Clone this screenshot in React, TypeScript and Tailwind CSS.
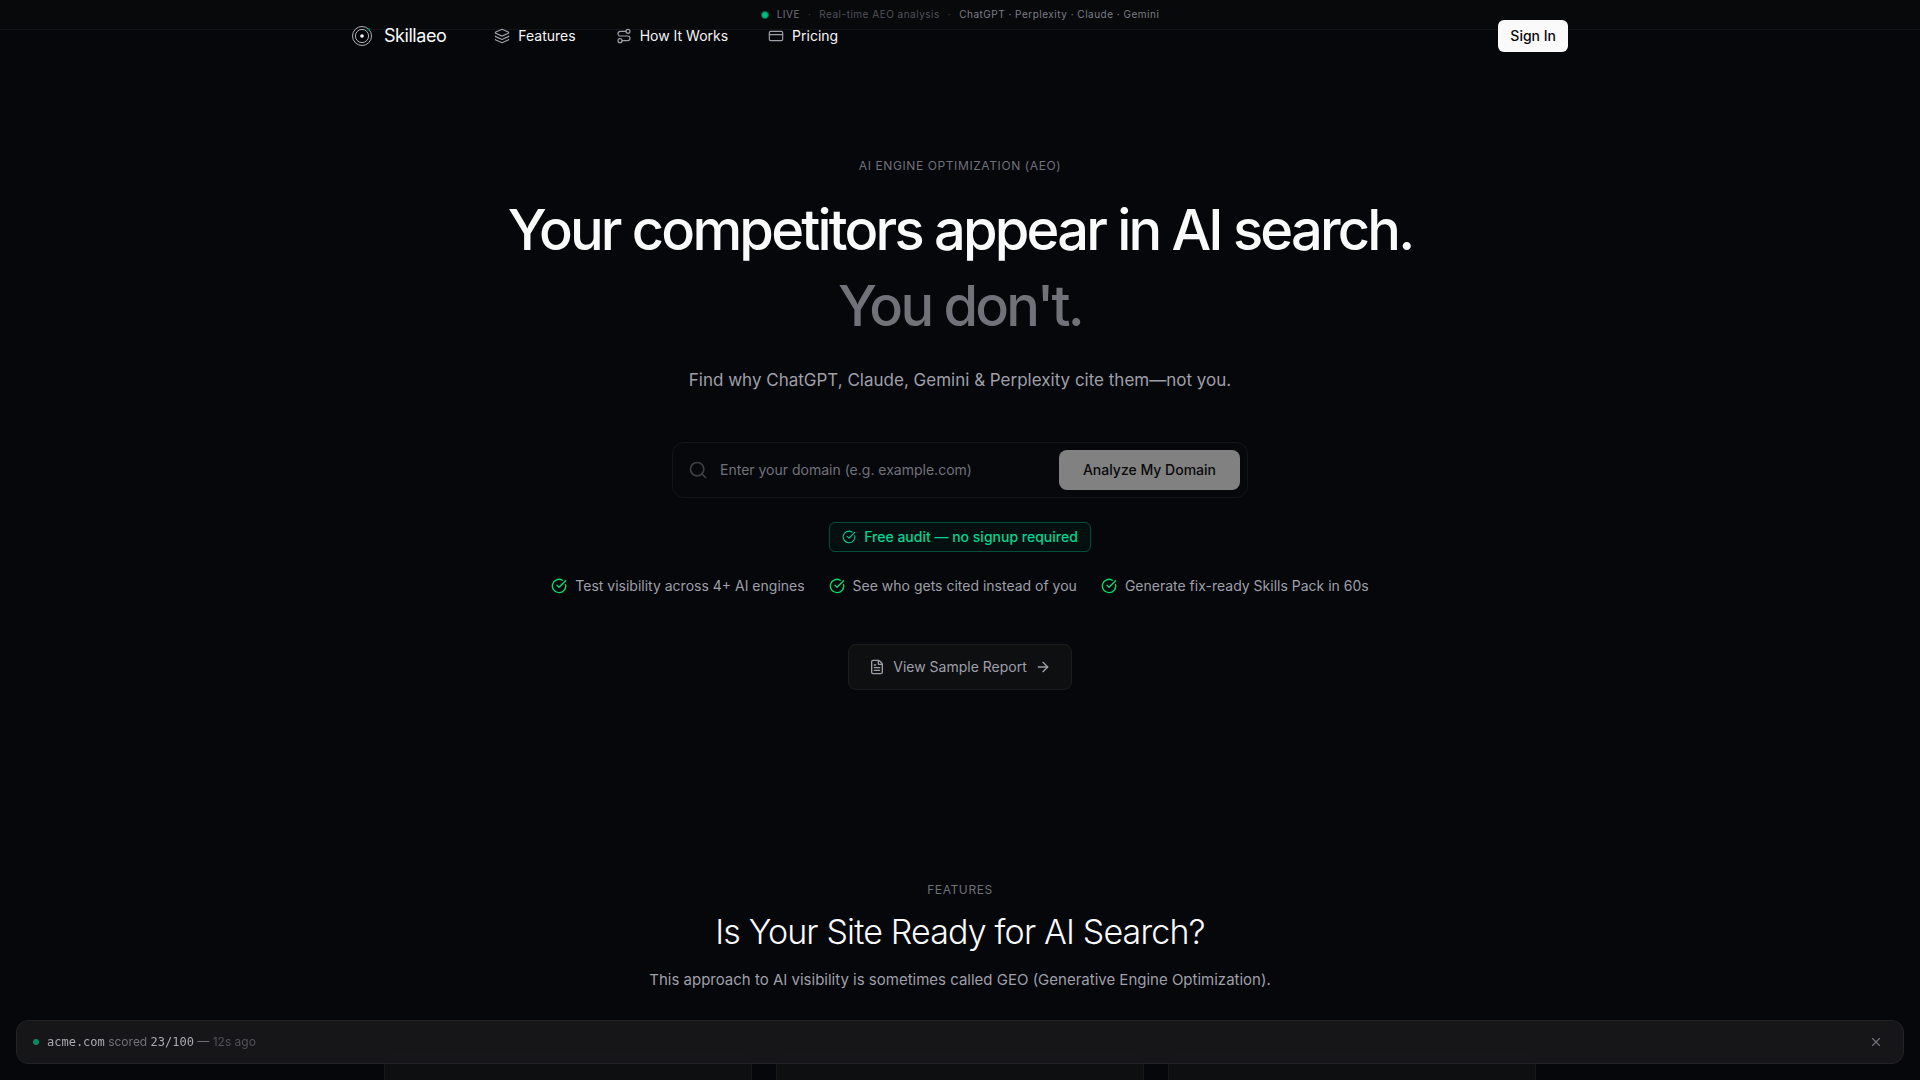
import React, { useState } from 'react';
import { ArrowRight, CircleCheckBig, CreditCard, FileText, Layers, Route, Search, X } from 'lucide-react';

const navLinks = [
  { id: 'features', label: 'Features', icon: Layers },
  { id: 'how-it-works', label: 'How It Works', icon: Route },
  { id: 'pricing', label: 'Pricing', icon: CreditCard }
];

const benefits = [
  'Test visibility across 4+ AI engines',
  'See who gets cited instead of you',
  'Generate fix-ready Skills Pack in 60s'
];

function Logo() {
  return (
    <svg viewBox="0 0 20 20" className="size-5" fill="none" aria-hidden="true">
      <circle cx="10" cy="10" r="9.5" stroke="#c4c4c8" strokeWidth="0.9" />
      <circle cx="10" cy="10" r="6.6" stroke="#c4c4c8" strokeWidth="0.9" />
      <circle cx="10" cy="10" r="1.8" fill="#fafafa" />
      <circle cx="16.7" cy="3.4" r="1.3" fill="#047857" />
    </svg>
  );
}

function LiveStrip() {
  return (
    <div className="col-start-1 row-start-1 self-start flex items-center justify-center gap-2 h-[30px] bg-[#08090b] border-b border-[#121315] text-[10px] tracking-wider text-[#3f3f46]">
      <span className="flex items-center gap-2 text-[#71717a]">
        <span className="size-2 rounded-full bg-[#00bc7d] border border-[#065f46]" />
        LIVE
      </span>
      <span>·</span>
      <span className="text-[#52525b]">Real-time AEO analysis</span>
      <span>·</span>
      <span className="text-[#7c7c85]">ChatGPT · Perplexity · Claude · Gemini</span>
    </div>
  );
}

function Header() {
  return (
    <header className="grid">
      <LiveStrip />
      <nav className="col-start-1 row-start-1 w-full max-w-7xl mx-auto px-8 h-[72px] flex items-center">
        <a href="#" className="flex items-center gap-3 text-lg tracking-tight text-[#fafafa]">
          <Logo />
          Skillaeo
        </a>
        <div className="ml-12 flex items-center gap-10">
          {navLinks.map(({ id, label, icon: Icon }) => (
            <a key={id} href={`#${id}`} className="flex items-center gap-2 text-sm text-[#f4f4f5]">
              <Icon className="size-4 text-[#9f9fa9]" strokeWidth={1.75} />
              {label}
            </a>
          ))}
        </div>
        <button className="ml-auto h-8 px-3 rounded-md bg-[#fafafa] text-sm font-medium text-[#09090b]">Sign In</button>
      </nav>
    </header>
  );
}

function Hero() {
  const [domain, setDomain] = useState('');
  return (
    <section className="flex flex-col items-center pt-[84px] text-center">
      <p className="text-xs leading-5 tracking-wider uppercase text-[#71717a]">AI Engine Optimization (AEO)</p>
      <h1 className="mt-4 text-[56px] leading-[76px] font-medium tracking-tighter text-[#fafafa]">
        Your competitors appear in AI search.
        <span className="block text-[#71717a]">You don't.</span>
      </h1>
      <p className="mt-[22px] text-[17px] leading-7 text-[#9f9fa9]">
        Find why ChatGPT, Claude, Gemini &amp; Perplexity cite them—not you.
      </p>

      <form
        onSubmit={e => e.preventDefault()}
        className="mt-12 w-full max-w-[576px] h-14 flex items-center pl-4 pr-2 rounded-xl ring-1 ring-inset ring-[#131517] bg-[#06080b]"
      >
        <Search className="size-5 text-[#3f3f46]" aria-hidden="true" />
        <input
          type="text"
          aria-label="Domain"
          value={domain}
          onChange={e => setDomain(e.target.value)}
          placeholder="Enter your domain (e.g. example.com)"
          className="flex-1 min-w-0 px-3 bg-transparent outline-none text-sm text-[#fafafa] placeholder:text-[#71717a]"
        />
        <button className="h-10 px-6 rounded-lg bg-[#818181] text-sm font-medium text-[#09090b]">Analyze My Domain</button>
      </form>

      <p className="mt-6 h-[30px] px-3 flex items-center gap-2 rounded-md border border-[#044e37] bg-[#04100f] text-sm font-medium text-[#00d492]">
        <CircleCheckBig className="size-3.5" strokeWidth={1.75} />
        Free audit — no signup required
      </p>

      <ul className="mt-6 flex flex-wrap justify-center gap-6 text-sm text-[#9f9fa9]">
        {benefits.map(text => (
          <li key={text} className="flex items-center gap-2">
            <CircleCheckBig className="size-4 text-[#05df72]" />
            {text}
          </li>
        ))}
      </ul>

      <a
        href="#sample-report"
        className="mt-12 h-[46px] px-5 flex items-center gap-2 rounded-lg border border-[#1c1d1f] bg-[#0e0f11] text-sm text-[#9f9fa9]"
      >
        <FileText className="size-4" />
        View Sample Report
        <ArrowRight className="size-4" />
      </a>
    </section>
  );
}

function Features() {
  return (
    <section id="features" className="pt-[190px] text-center">
      <p className="text-xs leading-5 tracking-wider uppercase text-[#71717a]">Features</p>
      <h2 className="mt-3 text-[34px] leading-10 font-light tracking-tight text-[#fafafa]">
        Is Your Site Ready for AI Search?
      </h2>
      <p className="mt-4 text-[15px] leading-6 text-[#9f9fa9]">
        This approach to AI visibility is sometimes called GEO (Generative Engine Optimization).
      </p>
      <div className="mt-[60px] mx-auto max-w-[1152px] grid grid-cols-3 gap-6">
        <div className="h-64 rounded-xl border border-[#17181a] bg-[#0e0f11]" />
        <div className="h-64 rounded-xl border border-[#17181a] bg-[#0e0f11]" />
        <div className="h-64 rounded-xl border border-[#17181a] bg-[#0e0f11]" />
      </div>
    </section>
  );
}

function ScoreToast() {
  const [open, setOpen] = useState(true);
  if (!open) return null;
  return (
    <div className="fixed inset-x-4 bottom-4 h-11 px-4 flex items-center rounded-xl border border-[#222326] bg-[#18181b]/90 backdrop-blur-md text-xs text-[#71717a]">
      <span className="size-1.5 mr-2 rounded-full bg-[#0a8a5f]" />
      <p>
        <span className="font-['DejaVu_Sans_Mono','Liberation_Mono',monospace] text-[#a9a9b1]">acme.com</span> scored{' '}
        <span className="font-['DejaVu_Sans_Mono','Liberation_Mono',monospace] text-[#a9a9b1]">23/100</span> —{' '}
        <span className="text-[#52525b]">12s ago</span>
      </p>
      <button aria-label="Dismiss" onClick={() => setOpen(false)} className="ml-auto p-1 text-[#71717a]">
        <X className="size-3.5" />
      </button>
    </div>
  );
}

export default function App() {
  return (
    <div className="h-screen overflow-hidden bg-[#05070a] font-['Inter','Liberation_Sans',sans-serif] antialiased">
      <Header />
      <main>
        <Hero />
        <Features />
      </main>
      <ScoreToast />
    </div>
  );
}
